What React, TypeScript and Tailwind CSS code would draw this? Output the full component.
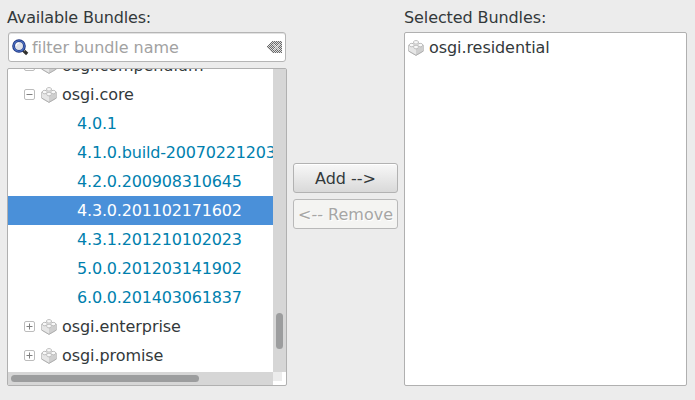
import React from "react";

const BundleIcon = () => (
  <svg width="16" height="16" viewBox="0 0 16 16" className="shrink-0">
    <path d="M.6 5.2 8 2l7.4 3.2v5.9L8 15.4.6 11.1z" fill="#f2f2f2" stroke="#b4b4b4" strokeWidth=".8" />
    <path d="M8 9 15 5.6v5.3L8 15z" fill="#cfcfcf" />
    <path d="M1 5.6 8 9v6L1 10.9z" fill="#e6e6e6" />
    <path d="M.8 11.1 8 15.3l7.2-4.2" fill="none" stroke="#a8a8a8" strokeWidth=".8" />
    <g fill="#f8f8f8" stroke="#a6a6a6" strokeWidth=".7">
      <path d="M5.7 1.6v1.5c0 1.3 4.6 1.3 4.6 0V1.6c0-1.4-4.6-1.4-4.6 0z" />
      <path d="M1.5 4.4v1.4c0 1.3 4.4 1.3 4.4 0V4.4c0-1.4-4.4-1.4-4.4 0z" />
      <path d="M10.1 4.4v1.4c0 1.3 4.4 1.3 4.4 0V4.4c0-1.4-4.4-1.4-4.4 0z" />
      <path d="M5.8 6.3v1.5c0 1.4 4.4 1.4 4.4 0V6.3c0-1.4-4.4-1.4-4.4 0z" />
    </g>
  </svg>
);

const Expander = ({ open }: { open?: boolean }) => (
  <svg width="11" height="11" viewBox="0 0 11 11" className="shrink-0">
    <rect x=".5" y=".5" width="10" height="10" rx="1.5" fill="#fff" stroke="#bcbcbc" />
    <path d={open ? "M2.5 5.5h6" : "M2.5 5.5h6M5.5 2.5v6"} stroke="#808080" />
  </svg>
);

const SearchIcon = () => (
  <svg width="17" height="17" viewBox="0 0 17 17" className="shrink-0">
    <path d="m11 11 4.2 4" stroke="#30302e" strokeWidth="3.2" />
    <path d="m11.2 10.5 1.5 1.5" stroke="#aaa58b" strokeWidth="1.3" />
    <circle cx="7" cy="7" r="5.4" fill="#dfe2ea" stroke="#1f357f" strokeWidth="2.8" />
    <circle cx="7" cy="7" r="5.3" fill="none" stroke="#4d74c8" strokeWidth="1.1" />
    <path d="M4 7a3 3 0 0 1 3-3" stroke="#fff" fill="none" />
  </svg>
);

const ClearIcon = () => (
  <svg width="16" height="12" viewBox="0 0 16 12" shapeRendering="crispEdges">
    <defs>
      <pattern id="check" width="2" height="2" patternUnits="userSpaceOnUse">
        <path d="M0 0h1v1H0zM1 1h1v1H1z" fill="#686868" />
      </pattern>
    </defs>
    <path d="M0 6 6 0h10v12H6z" fill="#dcdcdc" />
    <path d="M0 6 6 0h10v12H6z" fill="url(#check)" />
    <path d="m8 3 5 6m0-6L8 9" stroke="#fff" strokeOpacity=".45" strokeWidth="1.5" />
  </svg>
);

const Group = ({ name, open }: { name: string; open?: boolean }) => (
  <div className="flex h-[29px] items-center pl-4">
    <Expander open={open} />
    <span className="ml-[6px] flex"><BundleIcon /></span>
    <span className="ml-[5px] tracking-[-0.07px]">{name}</span>
  </div>
);

const versions = [
  "4.0.1",
  "4.1.0.build-200702212030",
  "4.2.0.200908310645",
  "4.3.0.201102171602",
  "4.3.1.201210102023",
  "5.0.0.201203141902",
  "6.0.0.201403061837",
];

export default function App() {
  return (
    <div className="flex h-[400px] w-[695px] overflow-hidden bg-[#ececec] pt-[3px] pl-[7px] font-['DejaVu_Sans',sans-serif] text-[16px] leading-[29px] whitespace-nowrap text-[#33393b]">
      <div className="w-[280px] shrink-0">
        <div className="h-[29px] tracking-[-0.16px]">Available Bundles:</div>
        <div className="ml-px flex h-[30px] w-[278px] items-center rounded-[3px] border border-[#b5b5b5] bg-white pl-[3px] pr-[3px] text-[#a2a2a2] shadow-[inset_0_1px_0_#e2e2e2]">
          <SearchIcon />
          <span className="ml-[3px] grow tracking-[-0.05px]">filter bundle name</span>
          <ClearIcon />
        </div>
        <div className="mt-[6px] grid h-[318px] grid-cols-[265px_13px] grid-rows-[303px_13px] rounded-[2px] border border-[#b0b0b0] bg-white">
          <div className="overflow-hidden">
            <div className="-mt-[18px]">
              <Group name="osgi.compendium" />
              <Group name="osgi.core" open />
              {versions.map((v, i) => (
                <div
                  key={v}
                  className={`h-[29px] pl-[69px] tracking-[-0.18px] ${i === 3 ? "bg-[#4a90d9] text-white" : "text-[#007fae]"}`}
                >
                  {v}
                </div>
              ))}
              <Group name="osgi.enterprise" />
              <Group name="osgi.promise" />
            </div>
          </div>
          <div className="bg-[#d6d6d6] pt-[244px] pl-[3px]">
            <div className="h-9 w-[7px] rounded-full bg-[#9c9d9e]" />
          </div>
          <div className="bg-[#d6d6d6] pt-[3px] pl-[3px]">
            <div className="h-[7px] w-[188px] rounded-full bg-[#9c9d9e]" />
          </div>
          <div>
            <div className="size-[9px] bg-[#ececec]" />
          </div>
        </div>
      </div>
      <div className="ml-[6px] flex w-[105px] shrink-0 flex-col gap-[6px] pt-[160px]">
        <button className="h-[30px] rounded-[3px] border border-[#b2b2b2] bg-linear-to-b from-[#f8f8f8] to-[#d9d9d9] pt-px leading-[28px] shadow-[inset_0_1px_0_#fff]">
          Add --&gt;
        </button>
        <button
          disabled
          className="h-[30px] rounded-[3px] border border-[#b9b9b9] bg-[#f4f4f2] pt-px leading-[28px] text-[#a6a6a5] [text-shadow:1px_1px_0_#fff]"
        >
          &lt;-- Remove
        </button>
      </div>
      <div className="ml-[6px] w-[283px] shrink-0">
        <div className="h-[29px] tracking-[-0.1px]">Selected Bundles:</div>
        <div className="h-[354px] rounded-[2px] border border-[#b0b0b0] bg-white">
          <div className="flex h-[29px] items-center pl-[3px]">
            <BundleIcon />
            <span className="ml-[5px] tracking-[-0.07px]">osgi.residential</span>
          </div>
        </div>
      </div>
    </div>
  );
}
